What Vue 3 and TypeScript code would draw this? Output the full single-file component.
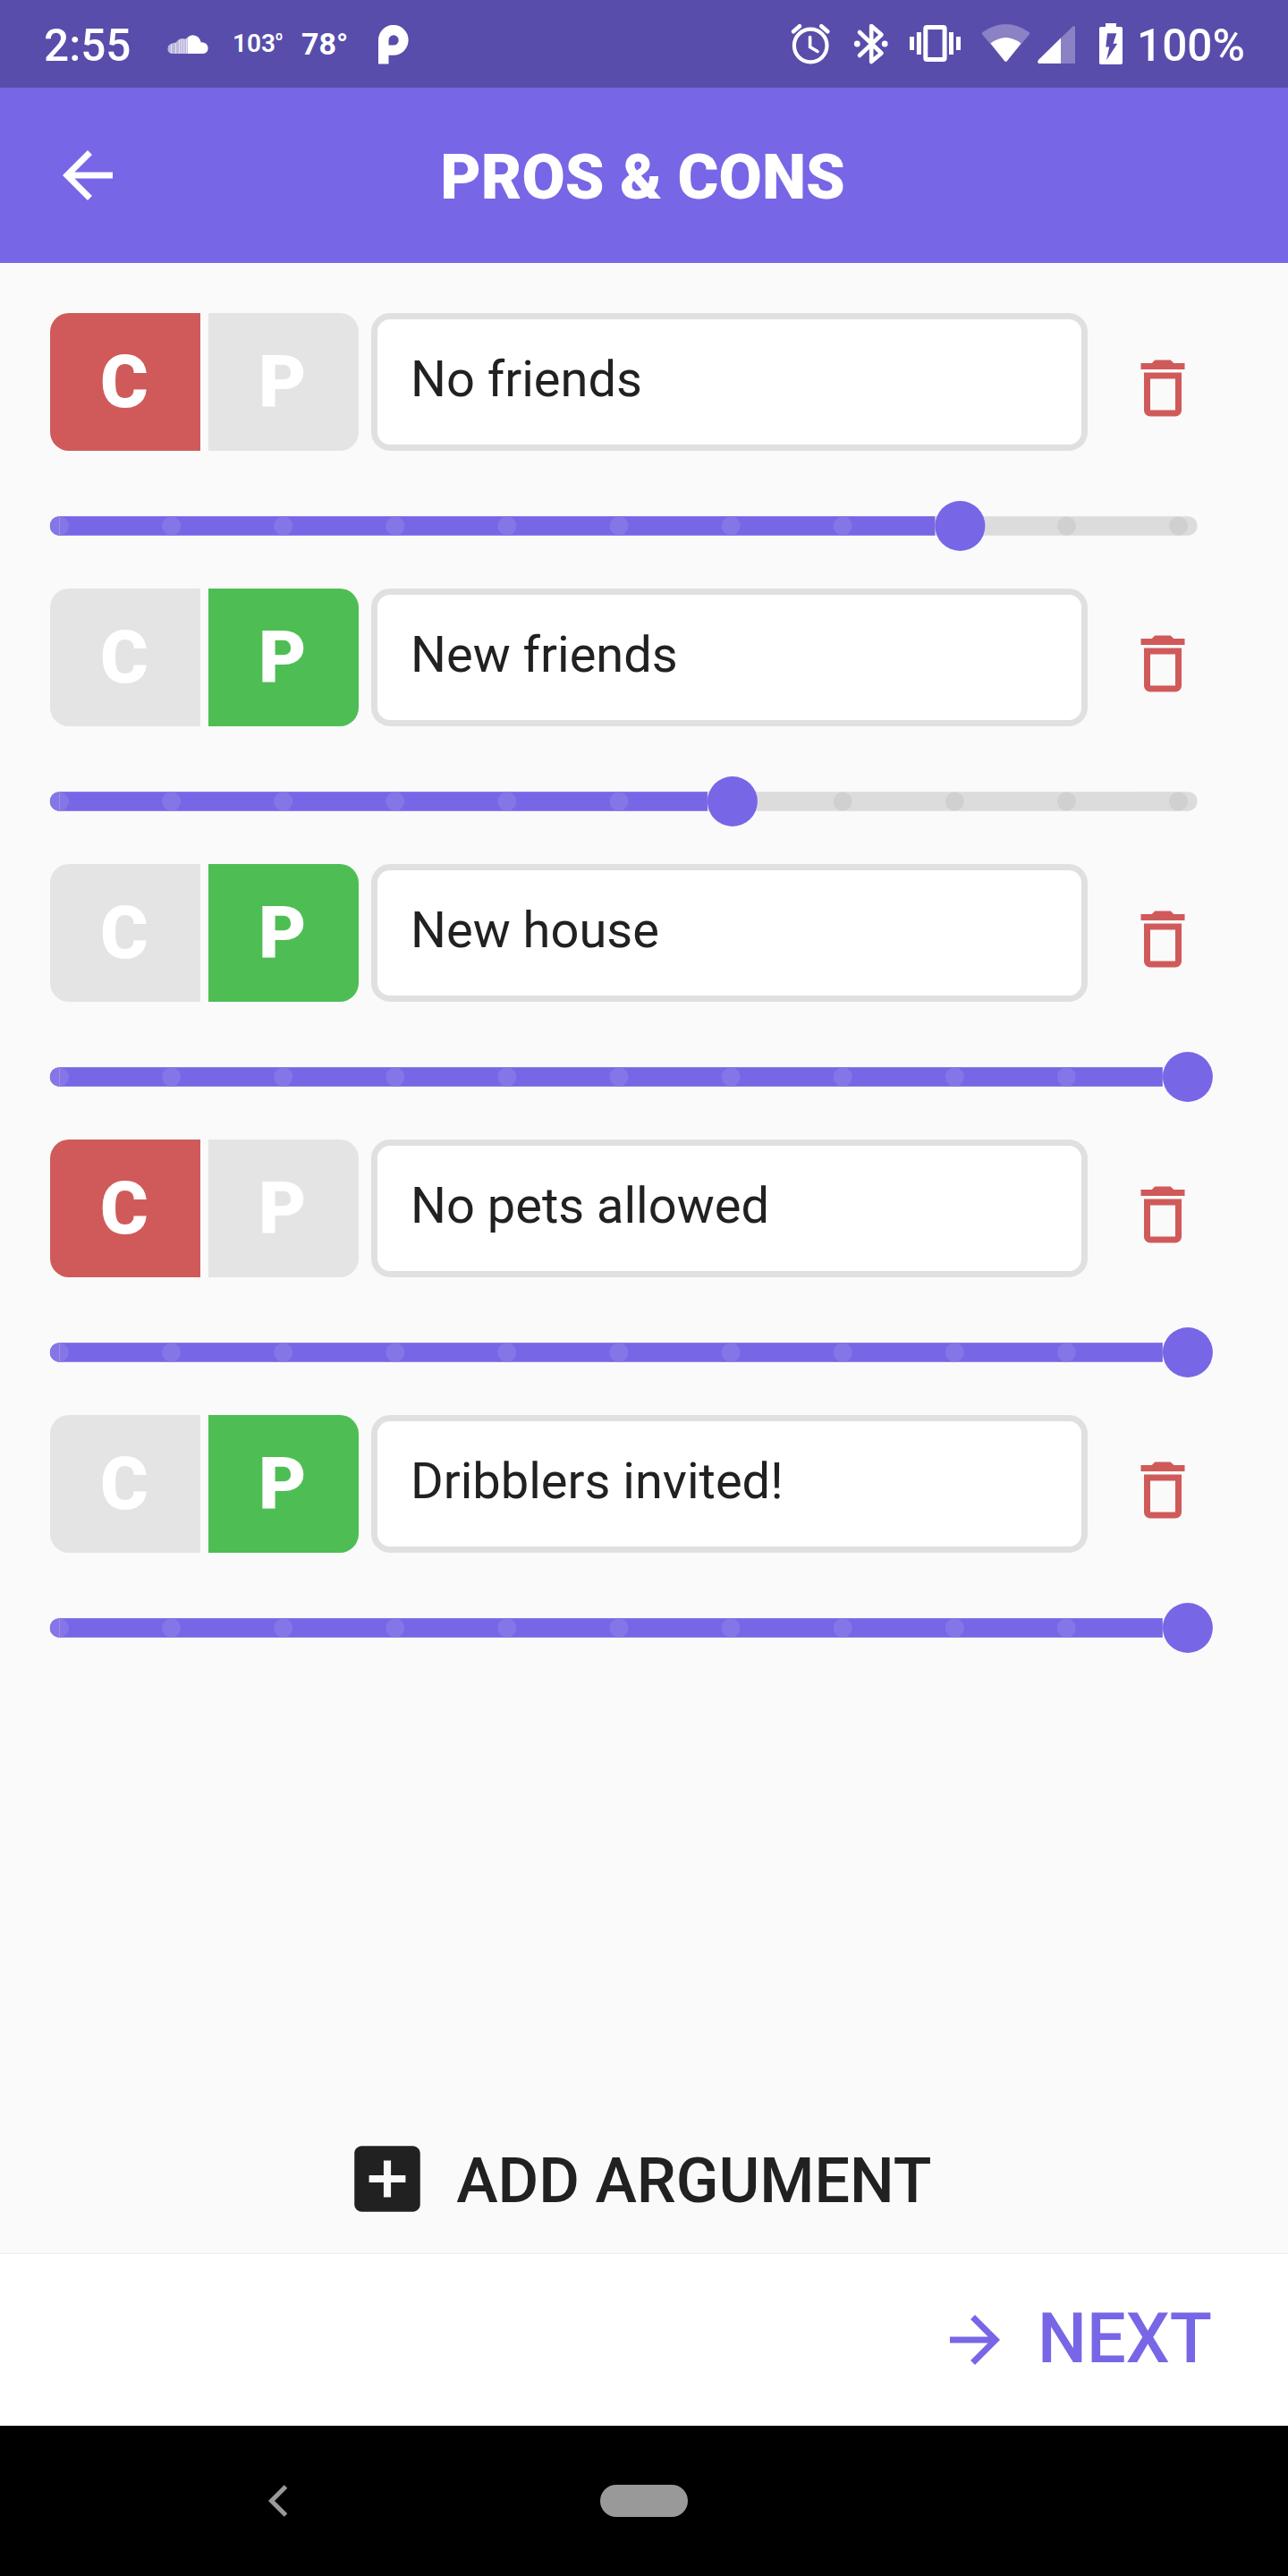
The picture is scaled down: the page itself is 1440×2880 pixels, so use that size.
<script setup lang="ts">
interface Argument {
  text: string
  kind: 'con' | 'pro'
  weight: number
}

const items: Argument[] = [
  { text: 'No friends', kind: 'con', weight: 8 },
  { text: 'New friends', kind: 'pro', weight: 6 },
  { text: 'New house', kind: 'pro', weight: 10 },
  { text: 'No pets allowed', kind: 'con', weight: 10 },
  { text: 'Dribblers invited!', kind: 'pro', weight: 10 },
]

const STEP = 127.25
const steps = Array.from({ length: 11 }, (_, i) => 10.5 + i * 125.1)
const thumbX = (weight: number) => weight * STEP - 0.6
const fillWidth = (weight: number) => thumbX(weight) - 28
</script>

<template>
  <div class="screen">
    <header class="status">
      <span class="clock">2:55</span>
      <svg class="cloud" width="46" height="22" viewBox="0 0 46 22">
        <path d="M22.5 3Q25 .3 28.500 .3Q36 .6 37.800 8.600Q39 8.200 40 8.400Q45.500 9.400 45.600 15Q45.200 20.700 40 21H22.500Z" fill="#fff" />
        <path d="M22.500 3.200L20 4.500Q15 3 12 6L9.500 8.500L6 9.200L3 10.500L1 12.500Q0 15.500 1 18.500L3 20.500L6 21H22.500Z" fill="#fff" opacity=".6" />
        <path d="M4.500 10.500V20.500M9.500 9V21M13.500 5.500V21M16 4.800V21M18.800 5V21M21.500 4.500V21" stroke="#fff" stroke-width="1" opacity=".6" />
      </svg>
      <span class="temp-small">103<sup>o</sup></span>
      <span class="temp">78°</span>
      <svg class="pocket" width="34" height="45" viewBox="0 0 34 45">
        <path d="M0 43.500V17A16.800 17 0 1 1 17 33.800H11.500V43.500ZM11.500 22.500H17A5.600 5.600 0 1 0 11.500 17Z" fill="#fff" fill-rule="evenodd" />
      </svg>
      <svg class="sys" width="380" height="50" viewBox="880 24 380 50">
        <g fill="none" stroke="#fff">
          <circle cx="906.200" cy="51" r="18.300" stroke-width="4.200" />
          <path d="M905.600 41.500V52.500L914 57.500" stroke-width="3.600" stroke-linecap="round" />
          <path d="M887 35.300L894 29.300M925.300 35.300L918.300 29.300" stroke-width="4.600" stroke-linecap="round" />
          <path d="M961 36L985.500 59.500L974.200 69V29L985.500 38.800L961 62" stroke-width="4.600" stroke-linecap="round" stroke-linejoin="round" />
          <rect x="1034.800" y="30.500" width="21.300" height="36" rx="1.500" stroke-width="5" />
        </g>
        <g fill="#fff">
          <circle cx="958.300" cy="49" r="3.400" />
          <circle cx="989.200" cy="49" r="3.400" />
          <path d="M1017 41h5v15h-5zM1024.900 36h5v25h-5zM1061 36h5v25h-5zM1069 41h5v15h-5z" />
          <path d="M1098.500 36Q1124.500 18 1150.500 36Q1151.800 37 1150.800 38.500L1126 68Q1124.500 70 1123 68L1098.200 38.500Q1097.200 37 1098.500 36Z" opacity=".3" />
          <path d="M1107.500 48.500Q1124.500 35.500 1141.500 48.500L1126 68Q1124.500 70 1123 68Z" />
          <path d="M1202 30V71H1162Q1159 70 1161 67L1199 30Q1201 28 1202 30Z" opacity=".3" />
          <path d="M1186 42.500V71H1162Q1159 70 1161 67Z" />
          <path d="M1236 26h12v4h5.200q1.800 0 1.800 1.800v38.400q0 1.800-1.800 1.800h-22.400q-1.800 0-1.800-1.800V31.800q0-1.800 1.800-1.800h5.200zM1238 37.300L1236.300 52.500H1240.300L1237 67.300L1249.300 48.700H1244.500L1248.300 37.300Z" fill-rule="evenodd" />
        </g>
      </svg>
      <span class="battery">100%</span>
    </header>

    <div class="appbar">
      <svg width="84" height="84" viewBox="0 0 24 24" fill="#fff"><path d="M20 11H7.830l5.590-5.590L12 4l-8 8 8 8 1.410-1.410L7.830 13H20v-2z" /></svg>
      <h1>PROS &amp; CONS</h1>
    </div>

    <main>
      <section v-for="item in items" :key="item.text" class="argument">
        <div class="line">
          <button class="toggle left" :class="{ con: item.kind === 'con' }">C</button>
          <button class="toggle right" :class="{ pro: item.kind === 'pro' }">P</button>
          <div class="field">{{ item.text }}</div>
          <svg class="trash" width="84" height="84" viewBox="0 0 24 24" fill="#d05a5a"><path d="M6 19c0 1.100.900 2 2 2h8c1.100 0 2-.900 2-2V7H6v12zM8 9h8v10H8V9zm7.500-5l-1-1h-5l-1 1H5v2h14V4h-3.500z" /></svg>
        </div>
        <svg class="slider" width="1304" height="56" viewBox="0 0 1304 56">
          <rect x="0" y="17.200" width="1282.600" height="21.500" rx="10.700" fill="#dcdcdc" />
          <path d="M10.500 17.200A10.700 10.750 0 0 0 10.500 38.700Z" fill="#7766e6" />
          <rect x="10.500" y="17.200" :width="fillWidth(item.weight) - 10.5" height="21.500" fill="#7766e6" />
          <rect v-if="item.weight === 10" :x="fillWidth(10)" y="16" width="60" height="24" fill="#fafafa" />
          <circle v-for="(x, i) in steps" :key="i" :cx="x" cy="28" r="10.500" :fill="i < item.weight ? '#8576e8' : '#d0d0d0'" />
          <path d="M10.500 17.500V38.500" stroke="#9b8fec" stroke-width="1" />
          <circle :cx="thumbX(item.weight)" cy="28" r="28" fill="#7766e6" />
        </svg>
      </section>
    </main>

    <button class="add">
      <svg width="98" height="98" viewBox="0 0 24 24" fill="#212121"><path d="M19 3H5c-1.110 0-2 .900-2 2v14c0 1.100.890 2 2 2h14c1.100 0 2-.900 2-2V5c0-1.100-.900-2-2-2zm-2 10h-4v4h-2v-4H7v-2h4V7h2v4h4v2z" /></svg>
      <span>ADD ARGUMENT</span>
    </button>

    <footer class="footer">
      <svg width="84" height="84" viewBox="0 0 24 24" fill="#7766e6"><path d="M12 4l-1.410 1.410L16.170 11H4v2h12.170l-5.580 5.590L12 20l8-8z" /></svg>
      <span>NEXT</span>
    </footer>

    <nav class="nav">
      <svg width="24" height="38" viewBox="0 0 24 38"><path d="M20.500 3L4.500 19L20.500 35" fill="none" stroke="#999" stroke-width="5" /></svg>
      <i class="pill"></i>
    </nav>
  </div>
</template>

<style>
body {
  margin: 0;
}
</style>

<style scoped>
.screen {
  width: 1440px;
  height: 2880px;
  display: flex;
  flex-direction: column;
  overflow: hidden;
  background: #fafafa;
  color: #212121;
  font-family: Roboto, sans-serif;
}
svg {
  display: block;
  flex: none;
}
button {
  border: 0;
  padding: 0;
  font-family: inherit;
  color: inherit;
}
.status {
  flex: none;
  height: 98px;
  background: #584dab;
  color: #fff;
  display: flex;
  align-items: flex-start;
  white-space: nowrap;
}
.status span {
  flex: none;
}
.clock {
  margin: 22px 0 0 49px;
  width: 138px;
  font: 500 49.500px/58px Roboto, sans-serif;
}
.cloud {
  margin-top: 39px;
}
.temp-small {
  margin: 32px 0 0 27px;
  width: 77px;
  font: 600 28px/34px Roboto, sans-serif;
}
.temp-small sup {
  font-size: 14px;
  line-height: 0;
  vertical-align: 13px;
}
.temp {
  margin: 29px 0 0 0;
  width: 86px;
  font: 700 34px/40px Roboto, sans-serif;
}
.pocket {
  margin-top: 28px;
}
.sys {
  margin: 24px 0 0 423px;
}
.battery {
  margin: 22px 0 0 11px;
  font: 500 49.500px/58px Roboto, sans-serif;
}
.appbar {
  flex: none;
  height: 196px;
  box-sizing: border-box;
  padding: 0 56px;
  background: #7766e6;
  color: #fff;
  display: flex;
  align-items: center;
}
.appbar h1 {
  flex: 1;
  margin: 3px 87px 0 0;
  text-align: center;
  font-size: 70px;
  line-height: 82px;
  font-weight: 900;
}
main {
  flex: none;
  padding: 56px 56px 0;
}
.argument {
  height: 308px;
}
.line {
  display: flex;
  height: 154px;
}
.toggle {
  width: 168px;
  height: 154px;
  padding-right: 2px;
  background: #e4e4e4;
  color: #fff;
  font-size: 82px;
  line-height: 154px;
  font-weight: 900;
}
.left {
  border-radius: 21px 0 0 21px;
}
.right {
  margin-left: 8.700px;
  border-radius: 0 21px 21px 0;
}
.con {
  background: #d05a5a;
}
.pro {
  background: #4ebe54;
}
.field {
  box-sizing: border-box;
  width: 801px;
  margin-left: 14.300px;
  padding-left: 37px;
  border: 7px solid #e0e0e0;
  border-radius: 21px;
  background: #fff;
  font-size: 56px;
  line-height: 134px;
  white-space: nowrap;
}
.trash {
  margin: 41.700px 0 0 42.200px;
}
.slider {
  margin-top: 56px;
  overflow: visible;
}
.add {
  height: 98px;
  margin-top: 496.700px;
  padding-left: 384.200px;
  background: none;
  display: flex;
  align-items: center;
  font-size: 70px;
  font-weight: 500;
  white-space: nowrap;
}
.add span {
  margin: 4px 0 0 28px;
}
.footer {
  flex: none;
  box-sizing: border-box;
  height: 193px;
  margin-top: auto;
  border-top: 1px solid #ececec;
  padding: 0 84px 0 1048px;
  background: #fff;
  color: #7766e6;
  display: flex;
  align-items: center;
  font-size: 77.500px;
  font-weight: 500;
  white-space: nowrap;
}
.footer span {
  margin: -4px 0 0 28px;
}
.nav {
  flex: none;
  height: 168px;
  background: #000;
  display: flex;
  align-items: center;
}
.nav svg {
  margin-left: 299px;
}
.pill {
  width: 98px;
  height: 36px;
  margin-left: 348px;
  border-radius: 18px;
  background: #999;
}
</style>
